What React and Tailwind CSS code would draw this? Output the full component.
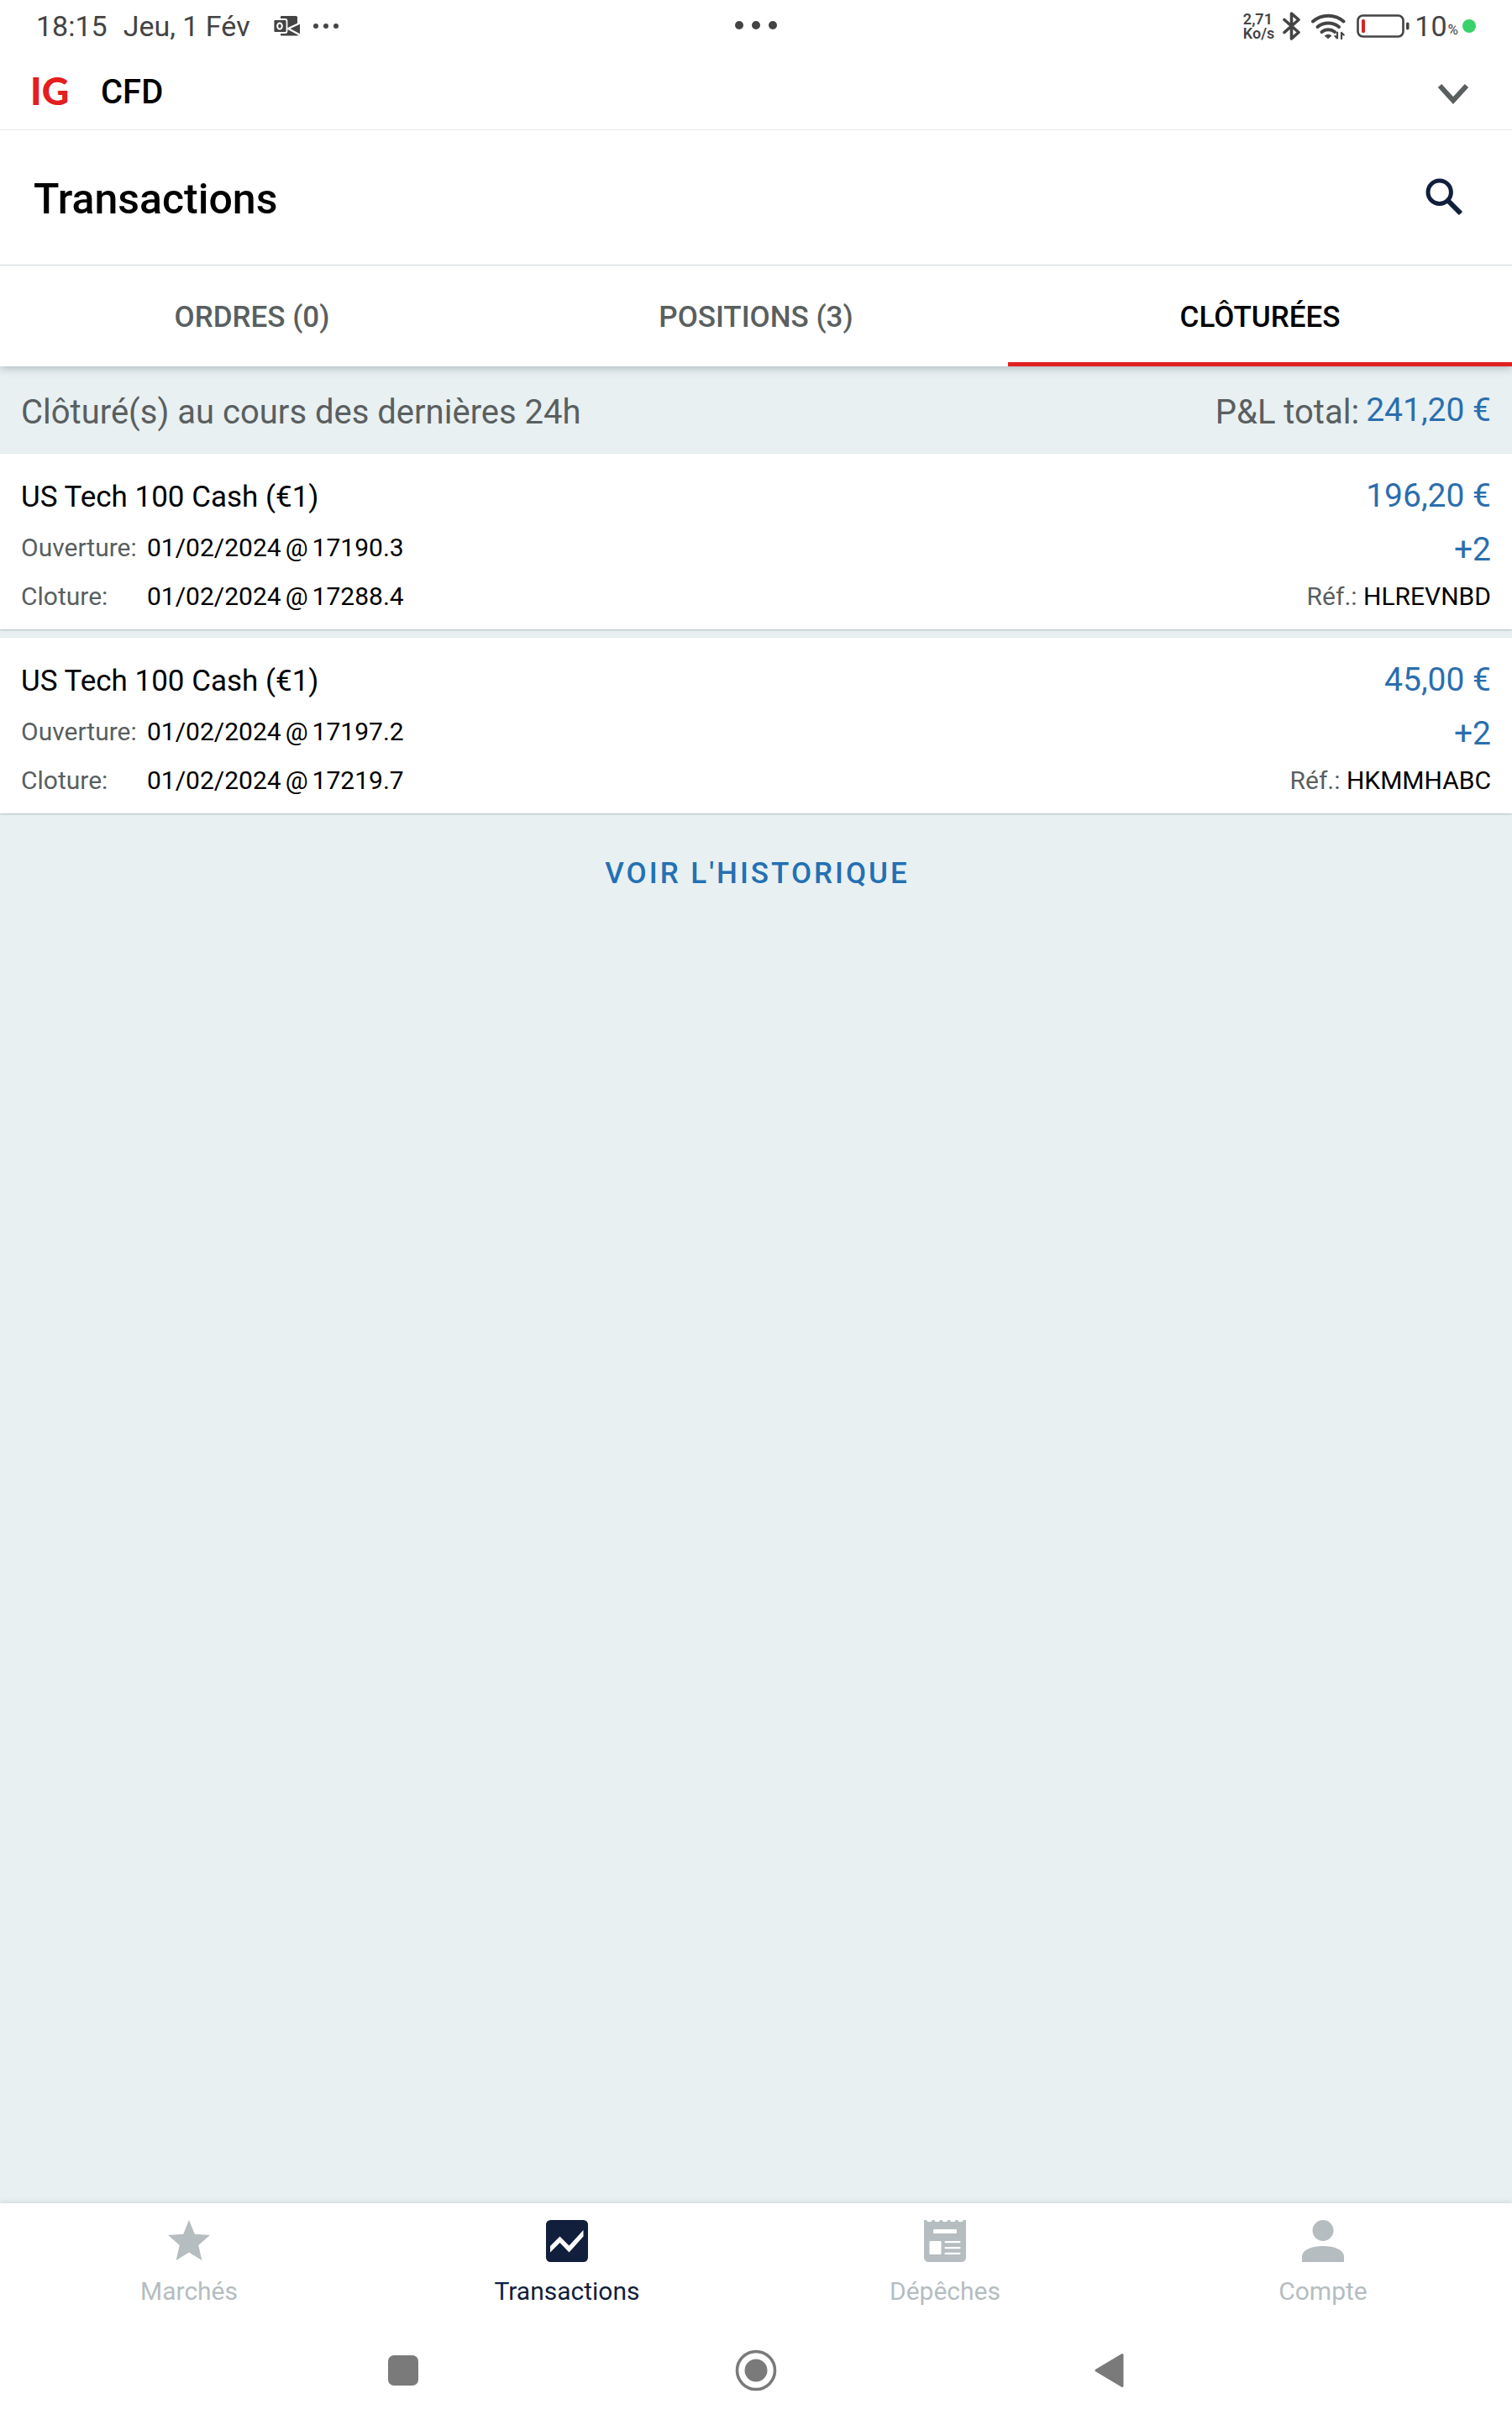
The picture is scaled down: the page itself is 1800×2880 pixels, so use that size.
import React, { useState } from "react";

const tabs = [
  { id: "orders", label: "ORDRES (0)" },
  { id: "positions", label: "POSITIONS (3)" },
  { id: "closed", label: "CLÔTURÉES" },
];

const trades = [
  {
    ref: "HLREVNBD",
    market: "US Tech 100 Cash (€1)",
    opened: { date: "01/02/2024", level: "17190.3" },
    closed: { date: "01/02/2024", level: "17288.4" },
    profit: "196,20 €",
    size: "+2",
  },
  {
    ref: "HKMMHABC",
    market: "US Tech 100 Cash (€1)",
    opened: { date: "01/02/2024", level: "17197.2" },
    closed: { date: "01/02/2024", level: "17219.7" },
    profit: "45,00 €",
    size: "+2",
  },
];

const StarIcon = () => (
  <svg viewBox="0 0 50 50" className="size-[50px]" fill="currentColor">
    <path d="M25 0l6.8 16.7L50 18 36.2 30l4.2 18L25 38.5 9.6 48l4.2-18L0 18l18.2-1.3z" />
  </svg>
);

const ChartIcon = () => (
  <svg viewBox="0 0 50 50" className="size-[50px]">
    <rect width="50" height="50" rx="5.5" fill="currentColor" />
    <path d="M5 31l11.5-11.5L27.5 30.5 44.5 12v7.5L27.5 38.5l-11-11.5L5 38.5z" fill="#fff" />
  </svg>
);

const NewsIcon = () => (
  <svg viewBox="0 0 50 50" className="size-[50px]">
    <path
      d="M0 0h3.2a3.3 2.2 0 0 0 6.6 0h2.6a3.3 2.2 0 0 0 6.6 0h2.7a3.3 2.2 0 0 0 6.6 0h2.7a3.3 2.2 0 0 0 6.6 0h2.6a3.3 2.2 0 0 0 6.6 0H50v44.5a5.5 5.5 0 0 1-5.5 5.5h-39A5.5 5.5 0 0 1 0 44.5z"
      fill="currentColor"
    />
    <g fill="#fff">
      <rect x="11" y="11" width="28" height="5" rx="1" />
      <rect x="6.5" y="25" width="14" height="16" rx="1" />
      <rect x="24.5" y="25" width="19" height="2.2" rx="1" />
      <rect x="24.5" y="32" width="19" height="2.2" rx="1" />
      <rect x="24.5" y="38.8" width="19" height="2.2" rx="1" />
    </g>
  </svg>
);

const UserIcon = () => (
  <svg viewBox="0 0 50 50" className="size-[50px]" fill="currentColor">
    <circle cx="25" cy="12.5" r="12.5" />
    <path d="M0 50v-6.5C0 35.5 12 31 25 31s25 4.500 25 12.500V50z" />
  </svg>
);

const navItems = [
  { id: "markets", label: "Marchés", Icon: StarIcon },
  { id: "deals", label: "Transactions", Icon: ChartIcon },
  { id: "news", label: "Dépêches", Icon: NewsIcon },
  { id: "account", label: "Compte", Icon: UserIcon },
];

function StatusBar() {
  return (
    <div className="grid h-[62px] grid-cols-3 items-center px-[43px] text-[34px] leading-[40px] text-[#444]">
      <div className="flex items-center">
        <span>18:15</span>
        <span className="ml-[19px]">Jeu, 1 Fév</span>
        <svg viewBox="0 0 31 24" className="ml-7 h-6 w-[31px]" fill="#444">
          <path d="M9 0h17.500a1.500 1.500 0 0 1 1.500 1.500V23.500H9a1 1 0 0 1-1-1V1a1 1 0 0 1 1-1z" />
          <path d="M26 10l5-1.500v14l-3 1z" />
          <path d="M31 8.500L17 15l14 7.500" fill="none" stroke="#fff" strokeWidth="2.200" />
          <rect x="-0.500" y="4" width="16" height="16" rx="2" stroke="#fff" strokeWidth="1.800" />
          <ellipse cx="7" cy="12" rx="2.800" ry="3.600" fill="none" stroke="#fff" strokeWidth="2" />
        </svg>
        <svg viewBox="0 0 30 6" className="ml-4 h-[6px] w-[30px]" fill="#444">
          <circle cx="3" cy="3" r="3" />
          <circle cx="15" cy="3" r="3" />
          <circle cx="27" cy="3" r="3" />
        </svg>
      </div>
      <svg viewBox="0 0 50 12" className="mb-[2px] h-3 w-[50px] justify-self-center" fill="#444">
        <circle cx="5" cy="6" r="5" />
        <circle cx="25" cy="6" r="5" />
        <circle cx="45" cy="6" r="5" />
      </svg>
      <div className="flex items-center justify-end">
        <div className="text-[18px] leading-[17px] font-semibold">
          <div>2,71</div>
          <div>Ko/s</div>
        </div>
        <svg viewBox="0 0 22 34" className="ml-[10px] h-[34px] w-[22px]" fill="none" stroke="#444" strokeWidth="3.6" strokeLinejoin="round" strokeLinecap="round">
          <path d="M2 9.5l17 15L10.5 32V2L19 9.5l-17 15" />
        </svg>
        <svg viewBox="0 0 41 32" className="ml-3 h-8 w-[41px]" fill="none" stroke="#444" strokeWidth="4" strokeLinecap="round">
          <path d="M2 10.5a28 28 0 0 1 36.5 0" />
          <path d="M7.5 17a20 20 0 0 1 25.5 0" />
          <path d="M12.5 23a12.5 12.5 0 0 1 15.5 0" />
          <path d="M16.5 27.5q3.8-2.6 7.5 0l-3.7 3z" fill="#444" strokeWidth="1" />
          <path d="M31 30.5V23.5M31 30.5l-2.5-2.500M36 24v7M36 24l2.700 2.500" strokeWidth="2.2" />
        </svg>
        <svg viewBox="0 0 63 28" className="ml-[13px] h-7 w-[63px]">
          <rect x="1.5" y="1.5" width="54" height="25" rx="6" fill="none" stroke="#444" strokeWidth="2.6" />
          <rect x="6" y="6" width="4" height="16" rx="1.5" fill="#d42525" />
          <rect x="59" y="9.5" width="3.500" height="9" rx="1.700" fill="#444" />
        </svg>
        <span className="ml-[6px]">10</span>
        <span className="mt-2 ml-px text-[17px]">%</span>
        <span className="ml-[5px] size-4 rounded-full bg-[#3ad16b]" />
      </div>
    </div>
  );
}

function TradeLine({ label, deal }) {
  return (
    <div className="flex">
      <dt className="w-[150px] text-[#5a5f60]">{label}</dt>
      <dd className="flex gap-[5px]">
        <span>{deal.date}</span>
        <span>@</span>
        <span>{deal.level}</span>
      </dd>
    </div>
  );
}

function TradeCard({ trade }) {
  return (
    <li className="flex justify-between bg-white px-[25px] pt-7 pb-[10px] shadow-[0_1px_2px_rgba(90,110,115,0.4)]">
      <div>
        <h2 className="text-[35px] leading-[48px]">{trade.market}</h2>
        <dl className="mt-[7px] text-[30px] leading-[58px]">
          <TradeLine label="Ouverture:" deal={trade.opened} />
          <TradeLine label="Cloture:" deal={trade.closed} />
        </dl>
      </div>
      <div className="flex flex-col items-end">
        <span className="text-[39px] leading-[44px] text-[#2a6eae]">{trade.profit}</span>
        <span className="mt-5 text-[39px] leading-[44px] text-[#2a6eae]">{trade.size}</span>
        <span className="mt-[5px] text-[30px] leading-[58px]">
          <span className="text-[#5a5f60]">Réf.:</span> {trade.ref}
        </span>
      </div>
    </li>
  );
}

export default function App() {
  const [tab, setTab] = useState("closed");
  const [page, setPage] = useState("deals");

  return (
    <div className="flex min-h-screen flex-col bg-[#e8f0f2] font-[Roboto,sans-serif] text-black">
      <header className="relative bg-white shadow-[0_2px_10px_rgba(60,75,80,0.35)]">
        <StatusBar />
        <div className="flex h-[93px] items-center border-b border-[#e3eaeb] pr-[50px] pl-9">
          <span className="w-[84px] font-[Lato,sans-serif] text-[45px] leading-[54px] font-black text-[#e41f1f]">IG</span>
          <span className="pt-[3px] text-[40px] leading-[48px] font-medium">CFD</span>
          <button type="button" aria-label="Changer de compte" className="ml-auto pt-2">
            <svg viewBox="0 0 40 26" className="h-[26px] w-10" fill="none" stroke="#5a5f60" strokeWidth="6">
              <path d="M4 3l16 17.5L36 3" />
            </svg>
          </button>
        </div>
        <div className="flex h-[161px] items-center justify-between border-b border-[#cfdadb] pr-[56px] pl-10">
          <h1 className="pt-[3px] text-[50px] leading-[60px] font-medium">Transactions</h1>
          <button type="button" aria-label="Rechercher">
            <svg viewBox="0 0 48 48" className="size-12" fill="none" stroke="#111f3d">
              <circle cx="17.7" cy="17.7" r="13.7" strokeWidth="5" />
              <path d="M28.5 28.5l14.5 14.5" strokeWidth="6" />
            </svg>
          </button>
        </div>
        <div role="tablist" className="grid h-[120px] grid-cols-3">
          {tabs.map((t) => (
            <button
              key={t.id}
              type="button"
              role="tab"
              aria-selected={tab === t.id}
              onClick={() => setTab(t.id)}
              className={`border-b-[5px] pt-[10px] text-[35px] font-medium ${
                tab === t.id ? "border-[#e02020] text-black" : "border-transparent text-[#5a5f60]"
              }`}
            >
              {t.label}
            </button>
          ))}
        </div>
      </header>

      <main className="flex-1">
        <div className="flex h-[104px] items-center justify-between px-[25px] pt-[6px] text-[40px] leading-[46px] text-[#5a5f60]">
          <span>Clôturé(s) au cours des dernières 24h</span>
          <div className="flex items-start gap-2">
            <span>P&amp;L total:</span>
            <span className="text-[39px] leading-[40px] text-[#2a6eae]">241,20 €</span>
          </div>
        </div>
        <ul className="space-y-[10px]">
          {trades.map((trade) => (
            <TradeCard key={trade.ref} trade={trade} />
          ))}
        </ul>
        <div className="flex justify-center pt-12">
          <a href="#historique" className="pl-[3px] text-[35px] leading-[48px] font-medium tracking-[3px] text-[#2470b3]">
            VOIR L'HISTORIQUE
          </a>
        </div>
      </main>

      <footer className="bg-white shadow-[0_-1px_6px_rgba(60,75,80,0.15)]">
        <nav className="grid grid-cols-4 pt-5">
          {navItems.map(({ id, label, Icon }) => (
            <button
              key={id}
              type="button"
              onClick={() => setPage(id)}
              className={`flex flex-col items-center gap-[17px] text-[30px] leading-[36px] ${
                page === id ? "text-[#111f3d]" : "text-[#b5bdc0]"
              }`}
            >
              <Icon />
              {label}
            </button>
          ))}
        </nav>
        <div className="flex h-[135px] items-center justify-center gap-[371px] pt-[17px]">
          <button type="button" aria-label="Applications récentes">
            <svg viewBox="0 0 48 48" className="size-12" fill="#7a7a7a">
              <rect x="6" y="6" width="36" height="36" rx="7" />
            </svg>
          </button>
          <button type="button" aria-label="Accueil">
            <svg viewBox="0 0 50 50" className="size-[50px]" fill="#7a7a7a">
              <circle cx="25" cy="25" r="22.5" fill="none" stroke="#7a7a7a" strokeWidth="3.6" />
              <circle cx="25" cy="25" r="13.5" />
            </svg>
          </button>
          <button type="button" aria-label="Retour">
            <svg viewBox="0 0 48 48" className="size-12" fill="#7a7a7a" stroke="#7a7a7a" strokeWidth="3" strokeLinejoin="round">
              <path d="M9 24L40 5.500v37z" />
            </svg>
          </button>
        </div>
      </footer>
    </div>
  );
}
